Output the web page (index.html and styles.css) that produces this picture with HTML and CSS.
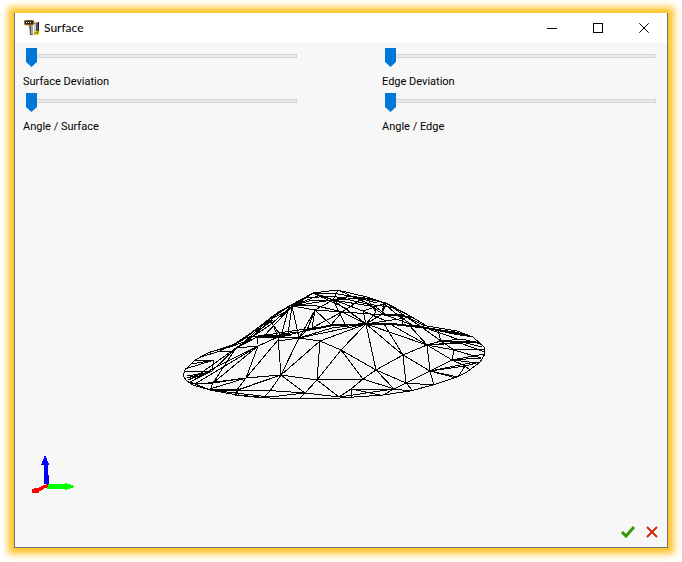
FILE: index.html
```html
<!DOCTYPE html>
<html lang="en">
<head>
<meta charset="utf-8">
<title>Surface</title>
<link rel="stylesheet" href="styles.css">
</head>
<body>
<main class="window">
  <header class="titlebar">
    <svg class="app-icon" width="16" height="16" viewBox="0 0 16 16" aria-hidden="true">
      <path d="M5 4h4v11H6z" fill="#55534e"/>
      <path d="M7 5h2v9H7z" fill="#aaa69c"/>
      <path d="M10 3l5-1v13h-4z" fill="#555"/>
      <path d="M10 4l2-1v11h-2z" fill="#c8c8c8"/>
      <path d="M14 2h1v12h-1z" fill="#222"/>
      <rect x="0" y="0" width="10" height="5" rx="2" fill="#302719" stroke="#c58d31"/>
      <path d="M2 2h1v1H2zM4 2h1v1H4zM6 2h1v1H6z" fill="#fff"/>
      <path d="M10 11h5v4h-5z" fill="#f5d900"/>
      <path d="M11 12v2M13 14v-2h2" stroke="#705d00" fill="none"/>
    </svg>
    <h1 class="title">Surface</h1>
    <div class="window-buttons">
      <button class="window-button" type="button" aria-label="Minimize"><svg width="10" height="11" viewBox="0 0 10 11"><path d="M0 5.500h10"/></svg></button>
      <button class="window-button" type="button" aria-label="Maximize"><svg width="10" height="11" viewBox="0 0 10 11"><path d="M.5.500h9v9h-9z"/></svg></button>
      <button class="window-button close" type="button" aria-label="Close"><svg width="10" height="11" viewBox="0 0 10 11"><path d="M.3.300l9.400 9.400M9.700.300l-9.400 9.400"/></svg></button>
    </div>
  </header>
  <section class="controls">
    <div class="control"><input class="slider" id="surface-deviation" type="range" value="0"><label class="label" for="surface-deviation">Surface Deviation</label></div>
    <div class="control"><input class="slider" id="edge-deviation" type="range" value="0"><label class="label" for="edge-deviation">Edge Deviation</label></div>
    <div class="control"><input class="slider" id="angle-surface" type="range" value="0"><label class="label" for="angle-surface">Angle / Surface</label></div>
    <div class="control"><input class="slider" id="angle-edge" type="range" value="0"><label class="label" for="angle-edge">Angle / Edge</label></div>
  </section>
  <section class="viewport">
    <svg class="scene" viewBox="15 135 652 382" aria-hidden="true">
      <g class="mesh">
        <path d="M183 376L187 381 193 385 210 390 237 395 270 398 340 398 383 395 410 391 433 385 457 377 467 372 480 362 485 354 484 347 473 337 457 331 427 326 410 316 385 303 367 297 337 290 313 293 293 304 270 319 244 342 230 347 210 352 195 360 185 370 183 376"/>
        <path d="M257 337L278 333 299 330 330 326 366 324 390 324 420 326 441 331 460 334 473 337"/>
        <path d="M201 357L220 351 233 351 244 343 257 337M208 353L232 345 246 338 270 334M220 351L243 340 274 315 291 305M228 348L248 335 271 318 281 310M236 348L270 325 292 306"/>
        <path d="M246 342L273 318 287 311 313 293M252 337L271 320 278 337 257 337 246 343M270 321L282 337M281 337L288 310 292 306M258 331L273 320M292 306L299 338M264 336L292 306"/>
        <path d="M278 337L281 375 299 338 278 337 258 346 236 348 257 337V344M258 346L246 378 278 340M258 346L213 383 236 348M214 368L258 346M201 373L236 348M195 384L258 346M246 378L281 375M213 383L246 378 201 384M281 375L237 390 246 378M281 375L238 390 210 389M210 389L246 378"/>
        <path d="M186 371L212 371 214 360 195 360M214 360L185 369M214 360L192 364M212 371L236 348M185 372L212 371 188 380 202 373M187 378L212 371M190 382L212 371M187 376L204 373M192 381L214 368M193 384L213 383 210 390 190 382"/>
        <path d="M210 390L276 391 305 393M237 391L239 395M263 398L270 391 281 375 305 393 300 398M238 390L235 395 263 398M210 390L270 397 305 393"/>
        <path d="M278 341L299 338 320 341 341 350 366 324 299 338M281 375L320 341 366 324 376 370 341 350 317 380 320 341M281 375L317 380 363 379 341 350M317 380L305 393 300 398M317 380L339 397 351 389 363 379 394 389 376 370 403 355 366 324 427 345 403 355 406 383 376 370 363 379M317 380L281 375M305 393L339 397M351 389L352 397M351 389L394 389M351 389L380 395M339 397L394 389 383 395M394 389L410 391"/>
        <path d="M403 355L430 371 406 383 394 389M406 383L413 391M430 371L427 345 452 360 430 371 434 385M406 383L434 385M430 371L458 377M430 371L465 366 458 377M454 350L427 345 441 341 420 326M454 350L441 341 476 341M452 360L481 358 454 350 485 349M452 360L454 350M452 360L485 354M465 366L480 362M465 366L470 370M465 366L452 360 478 363M430 371L470 363M430 371L456 378"/>
        <path d="M366 324L427 345 390 324M366 324L403 355 384 324M409 325L427 345 480 342M420 326L441 341 438 331M427 345L462 342 482 347M460 343L485 352M441 341L463 339 480 344M450 331L473 337M423 327L460 340M412 325L454 334 473 337"/>
        <path d="M292 306L313 293 338 294 363 298 386 303M292 306L333 300 338 290M292 306L315 310 342 312 366 324 333 300 315 310 299 338M292 306L320 295 342 303 363 311 386 321M313 293L333 300 363 298 342 312 313 305 292 306M313 293L345 308 366 324 363 311 386 303 412 317M342 312L331 325 315 310 312 328 342 312M338 290L367 303 384 315 412 317M333 300L367 298 384 303M333 300L376 307 386 315 412 325M367 298L376 312 366 324 412 317"/>
        <path d="M292 306L309 301 333 300 351 296 377 303M305 298L333 296 367 304 396 308M281 337L311 329 331 325 366 324M281 334L300 332 342 324M299 338L332 328 366 324M292 306L288 334M315 310L307 330 299 338M386 303L382 314 412 317M383 303L399 316 412 325M384 303L382 314M366 324L382 314 401 314 425 326M402 314V324M386 303L420 326M342 312L386 315M333 300L345 324"/>
        <path class="dense" d="M350 325L366 324 392 324 420 327 444 331 459 333M257 337L291 335"/>
      </g>
      <g class="axes">
        <path fill="#00f" d="M45 455l4 9-1 1 1 19h-5v-19h-3z"/>
        <path fill="#0f0" d="M47 484h18v-1l9 3v1l-9 3v-1H47z"/>
        <path fill="red" d="M48 484v3l-5 2v1l-4 1v2h-7v-4l9-2v-1z"/>
      </g>
    </svg>
  </section>
  <footer class="actions">
    <button class="action" type="button" aria-label="Accept"><svg width="16" height="14" viewBox="0 0 16 14"><path d="M2 7l4 4 8-9" fill="none" stroke="#36990b" stroke-width="3"/></svg></button>
    <button class="action" type="button" aria-label="Cancel"><svg width="16" height="14" viewBox="0 0 16 14"><path d="M3 2l10 10M13 2L3 12" fill="none" stroke="#cf2510" stroke-width="2"/></svg></button>
  </footer>
</main>
</body>
</html>
```
FILE: styles.css
```css
* { box-sizing: border-box; }
body { margin: 0; padding: 13px 14px 14px; background: #fff; min-height: 100vh; display: flex; color: #000; font-family: Roboto, "Liberation Sans", sans-serif; }
.window { flex: 1; display: flex; flex-direction: column; background: #f7f7f7; border: solid #727272; border-width: 0 1px 1px; box-shadow: 0 0 7px 6px #ffc42a; }
.titlebar { display: flex; align-items: center; height: 30px; padding-left: 9px; background: #fff; }
.title { margin: 0 0 0 4px; font: 12px/16px Lato, "Open Sans", sans-serif; }
.window-buttons { display: flex; margin-left: auto; height: 28px; }
.window-button { width: 46px; border: 0; padding: 0; background: transparent; display: grid; place-items: center; }
.window-button svg { fill: none; stroke: #000; shape-rendering: crispEdges; }
.close svg { shape-rendering: auto; }
.controls { display: grid; grid-template-columns: 1fr 1fr; column-gap: 85px; row-gap: 3px; padding: 5px 11px 0 8px; }
.control { display: flex; flex-direction: column; gap: 10px; }
.slider { appearance: none; -webkit-appearance: none; height: 16px; margin: 0 0 0 3px; background: transparent; }
.slider::-webkit-slider-runnable-track { height: 4px; border: 1px solid #d6d6d6; background: #e7eaea; }
.slider::-webkit-slider-thumb { -webkit-appearance: none; width: 11px; height: 19px; margin: -7px 0 0 -1px; background: #0078d7; clip-path: polygon(0 0, 100% 0, 100% 74%, 50% 100%, 0 74%); }
.label { font-size: 11px; line-height: 16px; align-self: flex-start; }
.viewport { flex: 1; min-height: 0; display: flex; }
.scene { width: 100%; height: 100%; display: block; }
.mesh { fill: none; stroke: #000; stroke-width: 1; shape-rendering: crispEdges; }
.dense { stroke-width: 2; }
.axes { shape-rendering: crispEdges; }
.actions { display: flex; justify-content: flex-end; gap: 8px; height: 30px; padding: 8px 7px 8px 0; }
.action { width: 16px; height: 14px; border: 0; padding: 0; background: transparent; display: flex; }
```
